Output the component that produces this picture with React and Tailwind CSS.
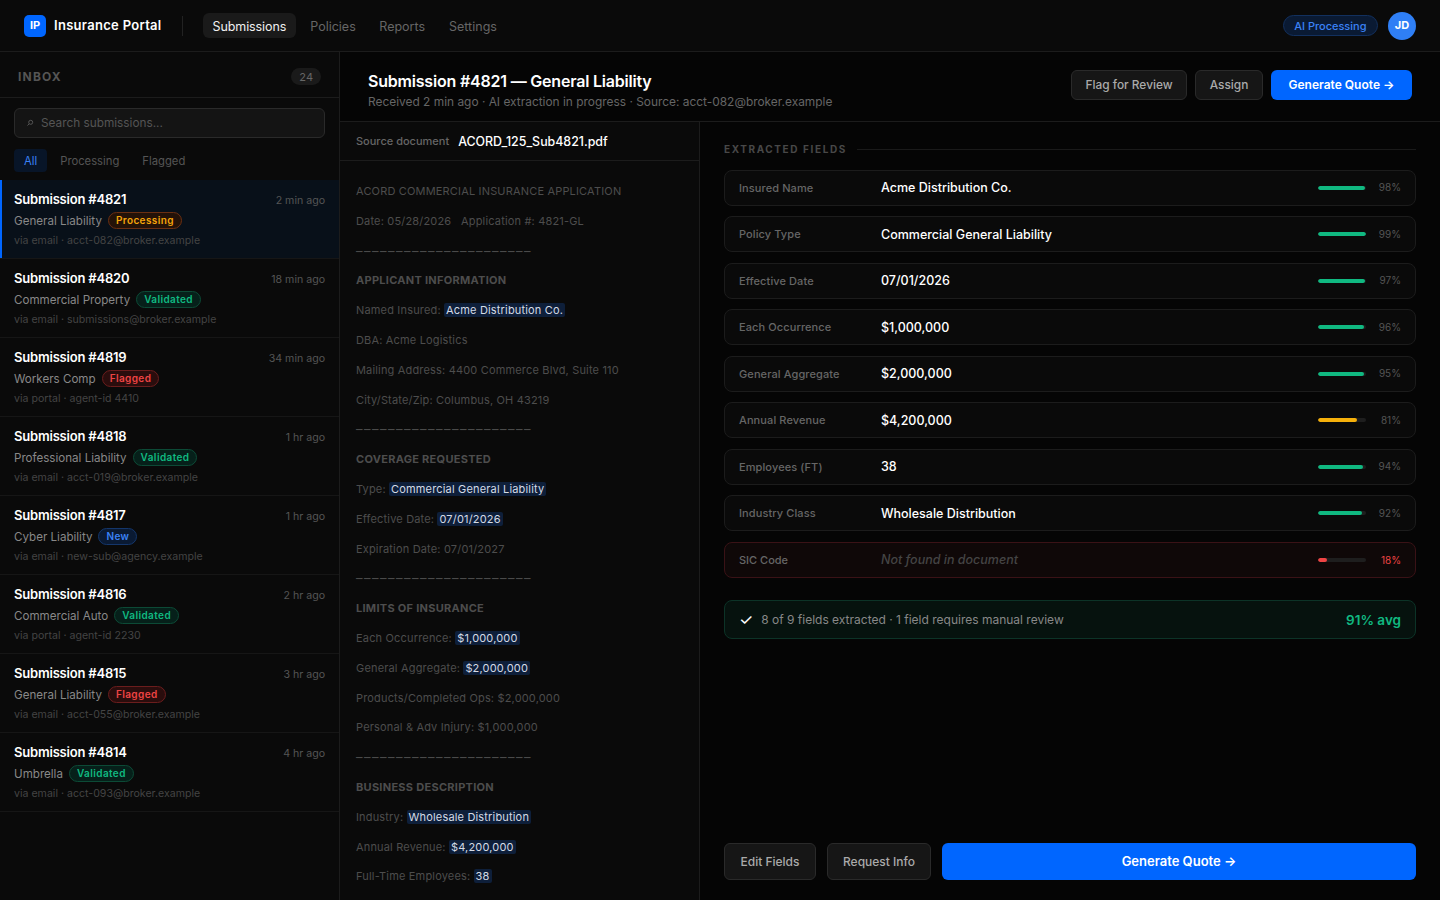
import React from "react";

const submissions = [
  { id: "4821", time: "2 min ago", type: "General Liability", status: "Processing", src: "via email · acct-082@broker.example", active: true },
  { id: "4820", time: "18 min ago", type: "Commercial Property", status: "Validated", src: "via email · submissions@broker.example" },
  { id: "4819", time: "34 min ago", type: "Workers Comp", status: "Flagged", src: "via portal · agent-id 4410" },
  { id: "4818", time: "1 hr ago", type: "Professional Liability", status: "Validated", src: "via email · acct-019@broker.example" },
  { id: "4817", time: "1 hr ago", type: "Cyber Liability", status: "New", src: "via email · new-sub@agency.example" },
  { id: "4816", time: "2 hr ago", type: "Commercial Auto", status: "Validated", src: "via portal · agent-id 2230" },
  { id: "4815", time: "3 hr ago", type: "General Liability", status: "Flagged", src: "via email · acct-055@broker.example" },
  { id: "4814", time: "4 hr ago", type: "Umbrella", status: "Validated", src: "via email · acct-093@broker.example" },
];

const badgeStyles = {
  Processing: "text-[#f5a50b] bg-[#241208] border-[#6b2f12]",
  Validated: "text-[#10b981] bg-[#06201a] border-[#0c4a36]",
  Flagged: "text-[#ef4444] bg-[#2a0d0d] border-[#6b1d1d]",
  New: "text-[#3b82f6] bg-[#0a1a33] border-[#14366b]",
};

const fields = [
  { label: "Insured Name", value: "Acme Distribution Co.", pct: 98 },
  { label: "Policy Type", value: "Commercial General Liability", pct: 99 },
  { label: "Effective Date", value: "07/01/2026", pct: 97 },
  { label: "Each Occurrence", value: "$1,000,000", pct: 96 },
  { label: "General Aggregate", value: "$2,000,000", pct: 95 },
  { label: "Annual Revenue", value: "$4,200,000", pct: 81, color: "bg-[#f5b00b]" },
  { label: "Employees (FT)", value: "38", pct: 94 },
  { label: "Industry Class", value: "Wholesale Distribution", pct: 92 },
];

function Mark({ children }) {
  return <span className="text-[#d4dbe6] bg-[#0e1f3a] rounded-[2px] px-[2px]">{children}</span>;
}

function Line({ children, bold }) {
  return (
    <div className={`h-[21.8px] leading-[21.8px] mb-2 whitespace-nowrap ${bold ? "font-bold text-[#4d4d4d] tracking-[0.28px]" : ""}`}>
      {children}
    </div>
  );
}

function Rule() {
  return (
    <div className="h-[21.8px] leading-[20px] mb-2 whitespace-nowrap text-[13px] text-[#4a4a4a] tracking-[1.5px]">
      ––––––––––––––––––––––
    </div>
  );
}

function Submission({ s }) {
  return (
    <div className={`h-[79px] border-b border-[#161616] px-[14px] pt-[11px] relative ${s.active ? "bg-[#081019]" : ""}`}>
      {s.active && <div className="absolute left-0 top-0 bottom-0 w-[2px] bg-[#0066ff]" />}
      <div className="flex justify-between items-center h-[18px]">
        <span className="text-[13px] font-semibold text-white tracking-[-0.2px]">Submission #{s.id}</span>
        <span className="pt-[2px] text-[10.6px] text-[#555]">{s.time}</span>
      </div>
      <div className="flex items-center gap-[6px] h-[18px] mt-[3px]">
        <span className="pt-[2px] text-[11.6px] text-[#888]">{s.type}</span>
        <span className={`text-[10px] font-semibold tracking-[0.4px] px-[7px] h-[17px] leading-[15px] rounded-full border -mt-px ${badgeStyles[s.status]}`}>{s.status}</span>
      </div>
      <div className="text-[10.6px] text-[#444] mt-[3px] h-[16px] leading-[16px]">{s.src}</div>
    </div>
  );
}

function FieldRow({ f }) {
  return (
    <div className="h-[36px] mb-[10.5px] flex items-center rounded-lg border border-[#1c1c1c] bg-[#0a0a0a] px-[14px]">
      <span className="w-[142px] pt-px text-[11px] font-medium text-[#666] tracking-[0.1px]">{f.label}</span>
      <span className="flex-1 pt-[2px] text-[12.5px] font-medium text-white">{f.value}</span>
      <div className="w-12 h-1 rounded-full bg-[#1e1e1e] overflow-hidden">
        <div className={`h-full rounded-full ${f.color || "bg-[#10b981]"}`} style={{ width: `${f.pct}%` }} />
      </div>
      <span className="w-[35px] text-right text-[10px] text-[#555]">{f.pct}%</span>
    </div>
  );
}

export default function App() {
  return (
    <div className="h-screen w-full overflow-hidden flex flex-col bg-[#050505] font-['Inter',sans-serif]">
      <header className="h-[52px] shrink-0 flex items-center justify-between bg-[#0a0a0a] border-b border-[#1c1c1c] pl-6 pr-6">
        <div className="flex items-center">
          <div className="w-[22px] h-[22px] rounded-[5px] bg-[#0066ff] flex items-center justify-center text-[11px] font-bold text-white">IP</div>
          <span className="ml-2 pt-px text-[13px] font-semibold text-white tracking-[0.3px]">Insurance Portal</span>
          <div className="w-px h-5 bg-[#222] ml-5 mr-5" />
          <nav className="flex items-center text-[12.5px] text-[#666]">
            <span className="px-[10px] h-[25px] leading-[27px] rounded-md bg-[#1a1a1a] text-[#f0f0f0] tracking-[-0.1px]">Submissions</span>
            <span className="px-[10px] h-[25px] leading-[27px] ml-1">Policies</span>
            <span className="px-[10px] h-[25px] leading-[27px] ml-[3.5px]">Reports</span>
            <span className="px-[10px] h-[25px] leading-[27px] ml-1">Settings</span>
          </nav>
        </div>
        <div className="flex items-center gap-[10px]">
          <span className="h-[21px] leading-[21px] px-[10.5px] rounded-full border border-[#12305e] bg-[#0a1a33] text-[11px] font-medium text-[#3b82f6]">AI Processing</span>
          <div className="w-7 h-7 rounded-full bg-[#2f7ff5] flex items-center justify-center text-[11px] font-bold text-white">JD</div>
        </div>
      </header>

      <div className="flex-1 flex min-h-0">
        <aside className="w-[340px] shrink-0 bg-[#0a0a0a] border-r border-[#1c1c1c] flex flex-col">
          <div className="h-[46px] shrink-0 flex items-center justify-between pl-[18px] pr-[18px] pt-1 border-b border-[#1c1c1c]">
            <span className="text-xs font-bold tracking-[1.2px] text-[#555]">INBOX</span>
            <span className="h-[17px] leading-[18px] px-2 rounded-full bg-[#1a1a1a] text-[11px] text-[#666]">24</span>
          </div>
          <div className="px-[14px] pt-[10px]">
            <div className="h-[30px] rounded-md border border-[#2a2a2a] bg-[#141414] flex items-center pl-[11px] text-[11.8px] text-[#555]">
              <svg width="8" height="8" viewBox="0 0 8 8" fill="none" stroke="#555" strokeWidth="1" className="mr-[7px]">
                <circle cx="4.7" cy="3.3" r="2" />
                <path d="M3.2 4.8L1.5 6.5" />
              </svg>
              <span className="pt-[2px]">Search submissions...</span>
            </div>
            <div className="flex items-center gap-[3px] mt-[11px] text-[11.25px] text-[#555]">
              <span className="px-[10px] h-[23px] leading-[25px] rounded bg-[#081528] text-[#3b82f6]">All</span>
              <span className="px-[10px] h-[23px] leading-[25px]">Processing</span>
              <span className="px-[10px] h-[23px] leading-[25px]">Flagged</span>
            </div>
          </div>
          <div className="mt-2">
            {submissions.map((s) => (
              <Submission key={s.id} s={s} />
            ))}
          </div>
        </aside>

        <main className="flex-1 flex flex-col min-w-0">
          <div className="h-[70px] shrink-0 flex items-start justify-between pl-7 pr-7 pt-[18px] border-b border-[#1c1c1c]">
            <div className="pt-px">
              <h1 className="text-base font-semibold text-white tracking-[-0.2px] leading-5">Submission #4821 — General Liability</h1>
              <p className="text-[11.92px] text-[#666] mt-[2px]">Received 2 min ago · AI extraction in progress · Source: acct-082@broker.example</p>
            </div>
            <div className="flex items-center gap-2">
              <button className="h-[30px] w-[116px] rounded-md border border-[#2a2a2a] bg-[#161616] text-[11.9px] font-medium text-[#aaa]">Flag for Review</button>
              <button className="h-[30px] w-[68px] rounded-md border border-[#2a2a2a] bg-[#161616] text-[11.9px] font-medium text-[#aaa]">Assign</button>
              <button className="h-[30px] w-[141px] rounded-md bg-[#0066ff] text-xs font-semibold text-white">Generate Quote →</button>
            </div>
          </div>

          <div className="flex-1 flex min-h-0">
            <section className="w-[360px] shrink-0 bg-[#0a0a0a] border-r border-[#1c1c1c] overflow-hidden">
              <div className="h-[39px] flex items-center px-4 border-b border-[#1c1c1c]">
                <span className="text-[11px] font-medium text-[#666]">Source document</span>
                <span className="ml-[9px] pt-[2px] text-[12.4px] font-medium text-white">ACORD_125_Sub4821.pdf</span>
              </div>
              <div className="px-4 pt-[20px] text-[11px] text-[#4d4d4d] tracking-[0.17px]">
                <Line>ACORD COMMERCIAL INSURANCE APPLICATION</Line>
                <Line>Date: 05/28/2026 &nbsp; Application #: 4821-GL</Line>
                <Rule />
                <Line bold>APPLICANT INFORMATION</Line>
                <Line>Named Insured: <Mark>Acme Distribution Co.</Mark></Line>
                <Line>DBA: Acme Logistics</Line>
                <Line>Mailing Address: 4400 Commerce Blvd, Suite 110</Line>
                <Line>City/State/Zip: Columbus, OH 43219</Line>
                <Rule />
                <Line bold>COVERAGE REQUESTED</Line>
                <Line>Type: <Mark>Commercial General Liability</Mark></Line>
                <Line>Effective Date: <Mark>07/01/2026</Mark></Line>
                <Line>Expiration Date: 07/01/2027</Line>
                <Rule />
                <Line bold>LIMITS OF INSURANCE</Line>
                <Line>Each Occurrence: <Mark>$1,000,000</Mark></Line>
                <Line>General Aggregate: <Mark>$2,000,000</Mark></Line>
                <Line>Products/Completed Ops: $2,000,000</Line>
                <Line>Personal &amp; Adv Injury: $1,000,000</Line>
                <Rule />
                <Line bold>BUSINESS DESCRIPTION</Line>
                <Line>Industry: <Mark>Wholesale Distribution</Mark></Line>
                <Line>Annual Revenue: <Mark>$4,200,000</Mark></Line>
                <Line>Full-Time Employees: <Mark>38</Mark></Line>
              </div>
            </section>

            <section className="flex-1 min-w-0 flex flex-col pl-6 pr-6 pt-[20px] pb-5">
              <div className="flex items-center gap-[10px] h-[15px] mb-[12.5px]">
                <span className="text-[10px] font-bold tracking-[1.6px] text-[#484848]">EXTRACTED FIELDS</span>
                <div className="flex-1 h-px bg-[#1a1a1a]" />
              </div>
              {fields.map((f) => (
                <FieldRow key={f.label} f={f} />
              ))}
              <div className="h-[36px] flex items-center rounded-lg border border-[#3a1216] bg-[#0f0808] px-[14px]">
                <span className="w-[142px] pt-px text-[11px] font-medium text-[#666]">SIC Code</span>
                <span className="flex-1 pt-[2px] text-[12.5px] font-medium italic text-[#444]">Not found in document</span>
                <div className="w-12 h-1 rounded-full bg-[#1e1e1e] overflow-hidden">
                  <div className="h-full w-[18%] rounded-full bg-[#ef4444]" />
                </div>
                <span className="w-[35px] pt-px text-right text-[10px] text-[#ef4444]">18%</span>
              </div>
              <div className="mt-[22px] h-[39px] flex items-center justify-between rounded-lg border border-[#0c3327] bg-[#06120e] px-[14px]">
                <div className="flex items-center gap-2">
                  <span className="text-base leading-4 text-white">✓</span>
                  <span className="pt-px text-xs text-[#888]">8 of 9 fields extracted · 1 field requires manual review</span>
                </div>
                <span className="pt-[2px] text-[13.5px] font-semibold text-[#10b981]">91% avg</span>
              </div>
              <div className="mt-auto flex gap-[11px]">
                <button className="h-[37px] w-[92px] pt-px rounded-md border border-[#2a2a2a] bg-[#161616] text-xs font-medium text-[#aaa]">Edit Fields</button>
                <button className="h-[37px] w-[104px] pt-px rounded-md border border-[#2a2a2a] bg-[#161616] text-xs font-medium text-[#aaa]">Request Info</button>
                <button className="h-[37px] flex-1 pt-px rounded-md bg-[#0066ff] text-[13px] font-semibold text-white">Generate Quote →</button>
              </div>
            </section>
          </div>
        </main>
      </div>
    </div>
  );
}
